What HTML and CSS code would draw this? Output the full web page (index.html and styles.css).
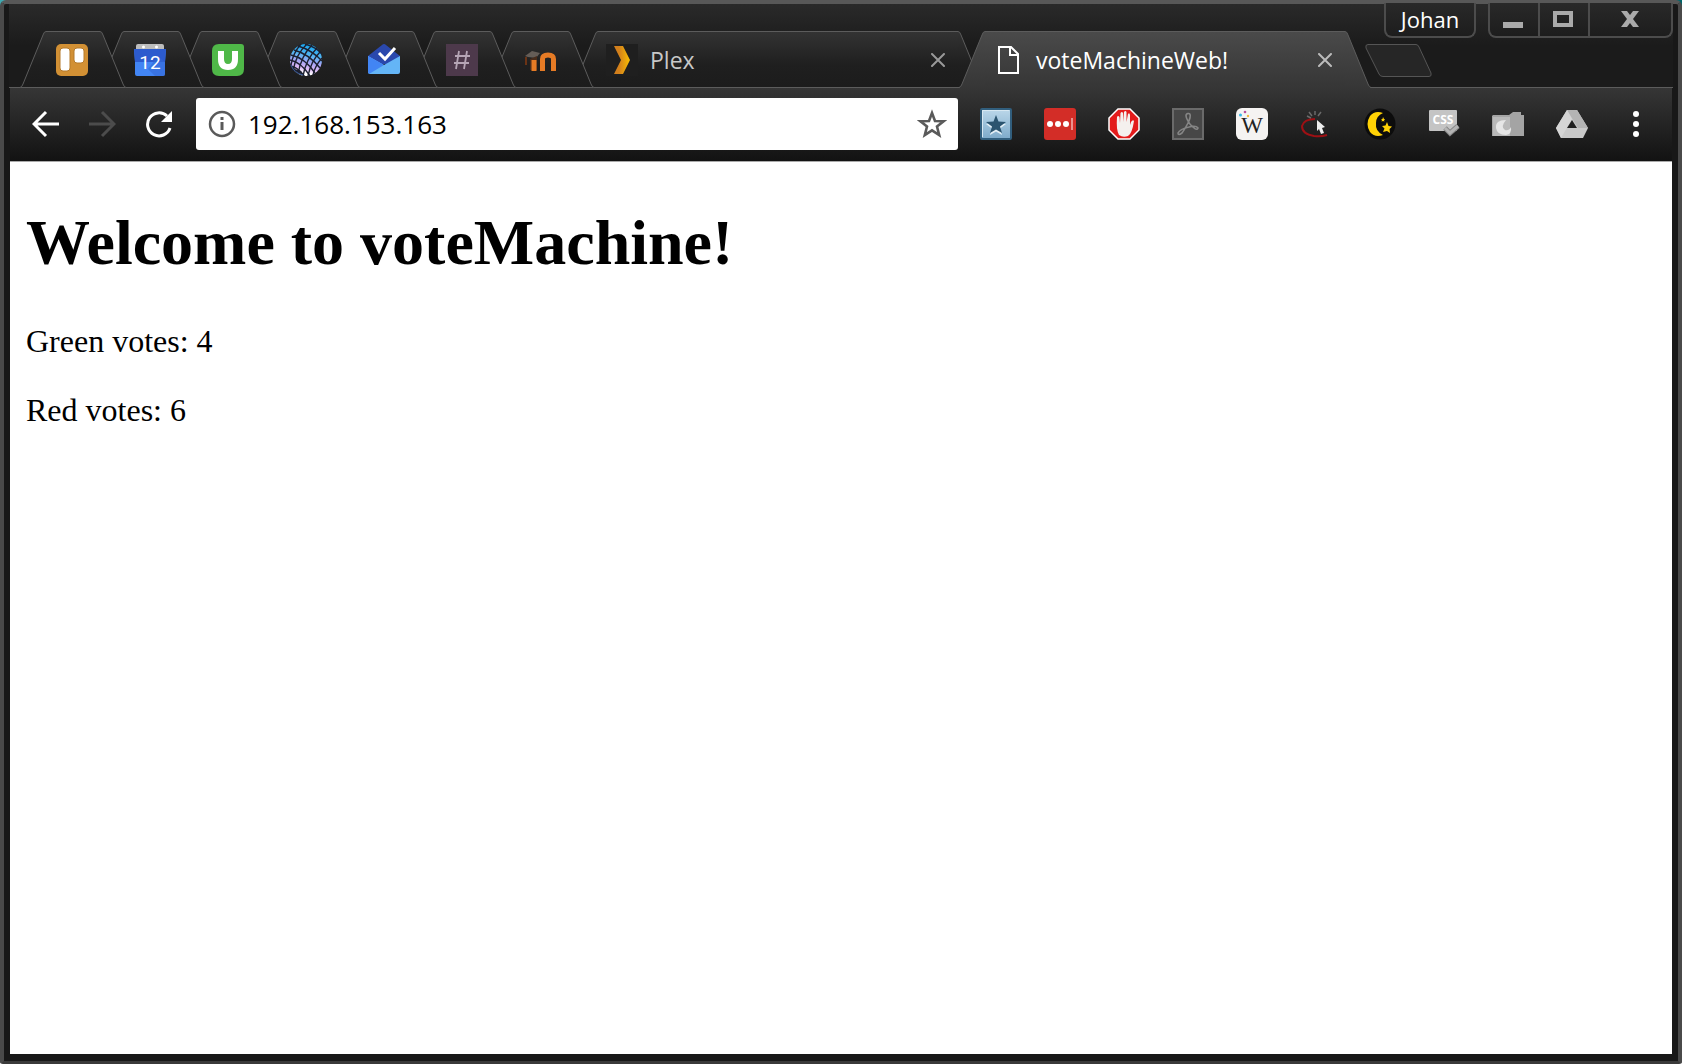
FILE: index.html
```html
<!DOCTYPE html>
<html lang="en">
<head>
<meta charset="utf-8">
<title>voteMachineWeb!</title>
<link rel="stylesheet" href="styles.css">
</head>
<body>
<svg class="defs" aria-hidden="true">
  <defs>
    <linearGradient id="tab-fill" x1="0" y1="0" x2="0" y2="57" gradientUnits="userSpaceOnUse"><stop offset="0" stop-color="#333"/><stop offset=".6" stop-color="#1f1f1f"/><stop offset="1" stop-color="#1c1c1c"/></linearGradient>
    <linearGradient id="active-fill" x1="0" y1="0" x2="0" y2="57" gradientUnits="userSpaceOnUse"><stop offset="0" stop-color="#4a4a4a"/><stop offset="1" stop-color="#363636"/></linearGradient>
    <symbol id="slope-left" viewBox="0 0 26 57"><path d="M0 57Q2 56 3 53L23 4Q24 .5 26 .5V57Z"/><path class="base" d="M1 56.500H26"/><path d="M0 56.500Q2 56 3 53L23 4Q24 .5 26 .5" stroke="#5c5c5c" fill="none"/></symbol>
    <symbol id="slope-right" viewBox="0 0 26 57"><path d="M26 57Q24 56 23 53L3 4Q2 .5 0 .5V57Z"/><path class="base" d="M0 56.500H25"/><path d="M26 56.500Q24 56 23 53L3 4Q2 .5 0 .5" stroke="#5c5c5c" fill="none"/></symbol>
    <symbol id="cross" viewBox="0 0 14 14"><path d="M1 1L13 13M13 1L1 13" stroke="currentColor" stroke-width="2" stroke-linecap="round"/></symbol>
  </defs>
</svg>
<div class="window">
  <header class="titlebar">
    <nav class="tabs" aria-label="Tabs">
      <div class="tab t1"><svg class="slope"><use href="#slope-left"/></svg>
        <button class="face pinned" aria-label="Trello"><svg class="icon" viewBox="0 0 32 32"><rect width="32" height="32" rx="5" fill="#d29034"/><rect x="4" y="4" width="10" height="23" rx="3" fill="#fff" stroke="#b57a2a"/><rect x="18" y="4" width="10" height="15" rx="3" fill="#fff" stroke="#b57a2a"/></svg></button>
        <svg class="slope"><use href="#slope-right"/></svg></div>
      <div class="tab t2"><svg class="slope"><use href="#slope-left"/></svg>
        <button class="face pinned" aria-label="Calendar"><svg class="icon" viewBox="0 0 32 32"><path d="M2 6V2Q2 0 4 0H28Q30 0 30 2V6Z" fill="#bdbdbd"/><circle cx="9.500" cy="3" r="1.500" fill="#fff"/><circle cx="22.500" cy="3" r="1.500" fill="#fff"/><path d="M0 5H32L31 18V30Q31 32 29 32H3Q1 32 1 30V18Z" fill="#4285f4"/><path d="M0 5H32L31 18H1Z" fill="#2c5bce"/><path d="M14 25L24 12L31 18V30Q31 32 29 32H21Z" fill="#3367d6" opacity=".6"/><text x="16" y="25" class="date">12</text></svg></button>
        <svg class="slope"><use href="#slope-right"/></svg></div>
      <div class="tab t3"><svg class="slope"><use href="#slope-left"/></svg>
        <button class="face pinned" aria-label="U"><svg class="icon" viewBox="0 0 32 32"><path d="M7 0H29Q32 0 32 3V25Q32 32 25 32H7Q0 32 0 25V7Q0 0 7 0Z" fill="#4fb848"/><path d="M9 7V15Q9 23 16 23T23 15V7" fill="none" stroke="#fff" stroke-width="6"/></svg></button>
        <svg class="slope"><use href="#slope-right"/></svg></div>
      <div class="tab t4"><svg class="slope"><use href="#slope-left"/></svg>
        <button class="face pinned" aria-label="Globe"><svg class="icon" viewBox="0 0 32 32"><defs><linearGradient id="globe" x1=".6" y1="0" x2=".4" y2="1"><stop offset="0" stop-color="#12a5ee"/><stop offset=".35" stop-color="#55b5f2"/><stop offset=".55" stop-color="#a3a4f5"/><stop offset=".75" stop-color="#d9b5f3"/><stop offset=".9" stop-color="#fff"/></linearGradient></defs><circle cx="16" cy="16" r="16" fill="url(#globe)"/><g fill="none" stroke="#1c2030" stroke-width="1.400"><path d="M8 2Q22 6 32 17M4 6Q19 10 30 24M1 11Q15 14 25 29M0 16Q11 18 20 32M0 22Q8 23 14 32M15 0Q26 3 32 10"/><path d="M11 0Q3 9 1 21M17 0Q6 10 3 27M22 1Q11 12 8 30M27 4Q16 15 13 32M30 8Q21 17 18 32M32 14Q25 22 23 31"/></g><path d="M0 19Q2 30 15 32L11 27L5 25Z" fill="#1c2030"/><path d="M1 21Q4 29 13 31" fill="none" stroke="#3c5f9c"/></svg></button>
        <svg class="slope"><use href="#slope-right"/></svg></div>
      <div class="tab t5"><svg class="slope"><use href="#slope-left"/></svg>
        <button class="face pinned" aria-label="Inbox"><svg class="icon" viewBox="0 0 32 32"><path d="M0 12L14 1Q16 -1 18 1L32 12V20H0Z" fill="#2a48ad"/><path d="M0 12L16 21L32 12V28Q32 30 30 30H2Q0 30 0 28Z" fill="#64b5f6"/><path d="M0 12L16 21L1 30L0 28Z" fill="#4285f4"/><path d="M11 9L17 15L27 4" fill="none" stroke="#fff" stroke-width="3"/></svg></button>
        <svg class="slope"><use href="#slope-right"/></svg></div>
      <div class="tab t6"><svg class="slope"><use href="#slope-left"/></svg>
        <button class="face pinned" aria-label="Slack"><svg class="icon" viewBox="0 0 32 32"><path d="M0 0H32V32H0Z" fill="#4d394b"/><path d="M13 7L10 25M21 7L18 25M9 12H24M8 19H23" fill="none" stroke="#b5a5b5" stroke-width="1.800"/></svg></button>
        <svg class="slope"><use href="#slope-right"/></svg></div>
      <div class="tab t7"><svg class="slope"><use href="#slope-left"/></svg>
        <button class="face pinned" aria-label="Moodle"><svg class="icon" viewBox="0 0 32 32"><path d="M1 12L8 7L16 9L12 14L4 13Z" fill="#655d57"/><path d="M2 13V21" stroke="#6b3315" stroke-width="2"/><path d="M6 15V26H13V12" fill="#4a2d1c"/><path d="M10 27V16M18.500 27V15Q18.500 11 24 11T29.500 15V27" fill="none" stroke="#e67b25" stroke-width="5"/></svg></button>
        <svg class="slope"><use href="#slope-right"/></svg></div>
      <div class="tab wide t8"><svg class="slope"><use href="#slope-left"/></svg>
        <div class="face"><button class="label"><svg class="icon" viewBox="0 0 32 32"><defs><linearGradient id="plex"><stop offset=".3" stop-color="#d27f1c"/><stop offset="1" stop-color="#f9be03"/></linearGradient></defs><path d="M0 0H32V32H0Z" fill="#1f1f1f"/><path d="M8 2H17L24 16L17 30H8L15 16Z" fill="url(#plex)"/></svg><span>Plex</span></button><button class="close" aria-label="Close Plex"><svg width="14" height="14"><use href="#cross"/></svg></button></div>
        <svg class="slope"><use href="#slope-right"/></svg></div>
      <div class="tab wide active"><svg class="slope"><use href="#slope-left"/></svg>
        <div class="face"><button class="label" aria-current="page"><svg class="icon" viewBox="0 0 32 32"><path d="M6 3H18L25 10V29H6ZM17 3V11H25" fill="none" stroke="#fff" stroke-width="2"/></svg><span>voteMachineWeb!</span></button><button class="close" aria-label="Close voteMachineWeb!"><svg width="14" height="14"><use href="#cross"/></svg></button></div>
        <svg class="slope"><use href="#slope-right"/></svg></div>
      <button class="newtab" aria-label="New tab"><svg width="68" height="33" viewBox="0 0 68 33"><path d="M3 .5H51Q53 .5 54 3L66 29Q67 32.500 64 32.500H18Q15 32.500 14 30L1 4Q0 .5 3 .5Z" fill="#262626" stroke="#555"/></svg></button>
    </nav>
    <div class="controls">
      <button class="user">Johan</button>
      <div class="winbuttons">
        <button class="min" aria-label="Minimize"><svg width="22" height="22" viewBox="0 0 22 22"><rect x="1" y="13" width="20" height="6" fill="#aaa"/></svg></button>
        <button class="max" aria-label="Maximize"><svg width="22" height="22" viewBox="0 0 22 22"><path d="M3 4H19V16H3Z" fill="none" stroke="#aaa" stroke-width="4"/></svg></button>
        <button class="quit" aria-label="Close"><svg width="22" height="22" viewBox="0 0 22 22"><path d="M2 2H8L11 6L14 2H20L14 10L20 18H14L11 14L8 18H2L8 10Z" fill="#aaa"/></svg></button>
      </div>
    </div>
  </header>
  <div class="toolbar">
    <button class="nav" aria-label="Back"><svg width="28" height="28" viewBox="0 0 28 28"><path d="M14 2L2 14L14 26M2 14H27" fill="none" stroke="#fff" stroke-width="3"/></svg></button>
    <button class="nav" aria-label="Forward" disabled><svg width="28" height="28" viewBox="0 0 28 28"><path d="M14 2L26 14L14 26M26 14H1" fill="none" stroke="#4c4c4c" stroke-width="3"/></svg></button>
    <button class="nav" aria-label="Reload"><svg width="28" height="28" viewBox="0 0 28 28"><path d="M26 18A11.500 11.500 0 1 1 23 6" fill="none" stroke="#fff" stroke-width="3"/><path d="M28 1V12H17Z" fill="#fff"/></svg></button>
    <div class="omnibox">
      <svg width="28" height="28" viewBox="0 0 28 28"><circle cx="14" cy="14" r="12" fill="none" stroke="#5a5a5a" stroke-width="2.500"/><path d="M14 7V10M14 12V20" stroke="#5a5a5a" stroke-width="3"/></svg>
      <input aria-label="Address" value="192.168.153.163">
      <button class="star" aria-label="Bookmark"><svg width="30" height="30" viewBox="0 0 30 30"><path d="M15 4L18 12L26.500 12.300L20 17.500L22.200 26L15 21.300L7.800 26L10 17.500L3.500 12.300L12 12Z" fill="none" stroke="#5a5a5a" stroke-width="2.600"/></svg></button>
    </div>
    <div class="extensions">
      <button aria-label="Bookmarks"><svg class="icon" viewBox="0 0 32 32"><defs><linearGradient id="blue" x1="0" y1="0" x2="0" y2="1"><stop offset="0" stop-color="#bcd8ea"/><stop offset="1" stop-color="#7daaca"/></linearGradient></defs><rect x="1" y="1" width="30" height="30" rx="1" fill="url(#blue)" stroke="#315e7d" stroke-width="2"/><path d="M2.500 29V2.500H29" stroke="#d7e8f2" fill="none"/><path d="M16 9L18.500 15.500L26 16L20 20.500L22 27L16 23.500L10 27L12 20.500L6 16L13.500 15.500Z" fill="#e3eff6"/><path d="M16 7L18.500 13.500L26 14L20 18.500L22 25L16 21.500L10 25L12 18.500L6 14L13.500 13.500Z" fill="#2b546f"/></svg></button>
      <button aria-label="LastPass"><svg class="icon" viewBox="0 0 32 32"><rect width="32" height="32" rx="3" fill="#d32d27"/><g fill="#fff"><circle cx="6" cy="16" r="3"/><circle cx="14" cy="16" r="3"/><circle cx="22" cy="16" r="3"/></g><path d="M28 10V22" stroke="#f3b4b2" stroke-width="1.500"/></svg></button>
      <button aria-label="AdBlock"><svg class="icon" viewBox="0 0 32 32"><path d="M10 1H22L31 10V22L22 31H10L1 22V10Z" fill="#e31b1b" stroke="#fff" stroke-width="1.500"/><path d="M9 9Q10 7 11.500 9L12 15L12.500 5Q14 3 15 5V14L16 4Q17.500 2 18.500 4V14L20 6Q21.500 4 22 7V17L23 14Q25 11 26 13Q24 26 20 28Q15 30 11 27Q8 22 9 9Z" fill="#f4f0ee"/></svg></button>
      <button aria-label="Acrobat"><svg class="icon" viewBox="0 0 32 32"><path d="M1 1H31V31H1Z" fill="#474747" stroke="#6a6a6a" stroke-width="2"/><path d="M16 13Q12 6 16 5.500T17 13Q13 21 10 25Q6 28 6 25Q8 21 17 19Q24 17 26 20Q25 23 21 19Q18 17 16 13Z" fill="none" stroke="#858585" stroke-width="1.600"/></svg></button>
      <button aria-label="W"><svg class="icon" viewBox="0 0 32 32"><rect width="32" height="32" rx="6" fill="#f5f3f2"/><circle cx="4.500" cy="7" r="1.500" fill="#36b9e8"/><circle cx="9" cy="4" r="1.300" fill="#b84f9b"/><circle cx="12" cy="8" r="1.200" fill="#f3bb38"/><text x="16" y="25" class="letter">W</text></svg></button>
      <button aria-label="Clicker"><svg class="icon" viewBox="0 0 32 32"><path d="M15 11Q4 11 2 18Q2 26 14 28Q21 29 27 27" fill="none" stroke="#9e1014" stroke-width="2"/><path d="M7 8L11 10M9 4L12 8M15 3V7M21 4L18 8" stroke="#6a6a6a" stroke-width="1.500"/><path d="M17 12L25 19L22 20L24 25L21 26L19 21L17 23Z" fill="#eee"/></svg></button>
      <button aria-label="Night mode"><svg class="icon" viewBox="0 0 32 32"><circle cx="16" cy="16" r="15.500" fill="#0c0c0c"/><path d="M19 5Q11 2 6 8Q1 16 6 24Q11 30 19 27Q11 23 12 15Q12 8 19 5Z" fill="#ffd205"/><path d="M23 14L24.500 18L28 18.500L25.500 21L26 25L23 23L19 24L20.500 20.500L18 18L21.500 17.500ZM19 9L20 11L21 11L20 12.500L20.500 13.500L19 13L17.500 13.500L18 12L17 11L18.500 11Z" fill="#ffd205"/></svg></button>
      <button aria-label="CSS viewer"><svg class="icon" viewBox="0 0 32 32"><rect x="1" y="2" width="28" height="21" rx="1" fill="#c4c4c4"/><text x="15" y="16" class="css">CSS</text><path d="M17 20L22 25L30 18" fill="none" stroke="#888" stroke-width="5"/><path d="M17 20L22 25L30 18" fill="none" stroke="#b5b5b5" stroke-width="3"/></svg></button>
      <button aria-label="Folder"><svg class="icon" viewBox="0 0 32 32"><path d="M1 7L17 7L21 4H29V7H32V28H0V8Z" fill="#a4a4a4"/><path d="M1 9H18V28H1Z" fill="#b9b9b9"/><path d="M14 12Q3 12 4 20Q5 27 14 27Q20 26 19 19Q17 23 13 22Q8 19 14 12Z" fill="#e6e6e6"/></svg></button>
      <button aria-label="Drive"><svg class="icon" viewBox="0 0 32 32"><path d="M11 2H21L32 20L27 30H5L0 20Z" fill="#c9c9c9"/><path d="M11 2H21L32 20H22Z" fill="#b4b4b4"/><path d="M0 20L11 2L16 11L5 30Z" fill="#d5d5d5"/><path d="M16 12L21 20H11Z" fill="#202020"/></svg></button>
    </div>
    <button class="menu" aria-label="Menu"><svg width="8" height="28" viewBox="0 0 8 28"><g fill="#fff"><circle cx="4" cy="4" r="3"/><circle cx="4" cy="14" r="3"/><circle cx="4" cy="24" r="3"/></g></svg></button>
  </div>
  <main class="page">
    <h1>Welcome to voteMachine!</h1>
    <p>Green votes: 4</p>
    <p>Red votes: 6</p>
  </main>
</div>
</body>
</html>
```
FILE: styles.css
```css
* { box-sizing: border-box; }
html { background: linear-gradient(90deg, #3fa9b0, #00666a) top / 100% 50% no-repeat #f4f4f4; }
body { margin: 0; font-family: "Open Sans", "Noto Sans", sans-serif; }
button { margin: 0; padding: 0; border: 0; background: none; color: inherit; font: inherit; }
svg { display: block; flex: none; }
.defs { position: absolute; width: 0; height: 0; }
.icon { width: 32px; height: 32px; }

.window {
  display: flex;
  flex-direction: column;
  min-height: 100vh;
  padding: 0 6px 7px;
  border: 4px solid #4a4a4a;
  border-top-color: #585858;
  border-bottom: 3px solid #3a3a3a;
  border-radius: 6px 6px 3px 3px;
  background: #181818;
}

.titlebar {
  display: grid;
  height: 84px;
  margin: 0 -1px;
  background: linear-gradient(#2a2a2a, #1b1b1b 50%);
  border-bottom: 1px solid #5c5c5c;
}
.tabs {
  grid-area: 1 / 1;
  display: flex;
  align-self: end;
  isolation: isolate;
  height: 57px;
  padding-left: 11px;
  margin-bottom: -1px;
}
.tab {
  --base-line: #5c5c5c;
  position: relative;
  display: flex;
  flex: none;
  margin-right: -28px;
  fill: url(#tab-fill);
}
.base { stroke: var(--base-line); }
.slope { width: 26px; height: 57px; }
.face {
  display: flex;
  align-items: center;
  flex: 1;
  min-width: 0;
  padding: 0 13px 0 8px;
  border-top: 1px solid #5c5c5c;
  border-bottom: 1px solid var(--base-line);
  background: linear-gradient(#333, #1f1f1f 60%, #1c1c1c);
}
.pinned { width: 54px; padding: 0 0 0 10px; }
.wide { flex: 0 1 412px; min-width: 0; margin-right: -25px; color: #c8c8c8; font-size: 23px; }
.t1 { z-index: 8; }
.t2 { z-index: 7; }
.t3 { z-index: 6; }
.t4 { z-index: 5; }
.t5 { z-index: 4; }
.t6 { z-index: 3; }
.t7 { z-index: 2; margin-right: -22px; }
.t8 { z-index: 1; }
.active { --base-line: #363636; z-index: 9; margin-right: -6px; color: #fff; fill: url(#active-fill); }
.active .face { background: linear-gradient(#4a4a4a, #363636); }
.label { display: flex; align-items: center; gap: 12px; flex: 1; min-width: 0; text-align: left; white-space: nowrap; }
.active .label { gap: 11px; }
.close { color: #999; }
.active .close { color: #bbb; }
.newtab { align-self: center; margin-top: 2px; }

.controls {
  grid-area: 1 / 1;
  display: flex;
  gap: 12px;
  justify-self: end;
  align-self: start;
  height: 35px;
  margin-top: -1px;
}
.user, .winbuttons {
  border: 2px solid #4c4c4c;
  border-top: 0;
  border-radius: 0 0 8px 8px;
  background: linear-gradient(#292929, #1d1d1d);
}
.user { width: 92px; padding-bottom: 2px; color: #fff; font-size: 22px; line-height: 30px; }
.winbuttons { display: flex; width: 185px; }
.winbuttons button { display: grid; place-items: center; width: 50px; padding-right: 2px; border-right: 2px solid #4c4c4c; }
.winbuttons .quit { flex: 1; border: 0; }

.toolbar {
  display: flex;
  align-items: center;
  height: 74px;
  padding: 0 16px 2px 8px;
  background: linear-gradient(#363636, #121212);
  border-bottom: 1px solid #aaa;
}
.nav { display: grid; place-items: center; width: 56px; height: 52px; }
.omnibox {
  display: flex;
  align-items: center;
  gap: 12px;
  flex: 1;
  min-width: 0;
  height: 52px;
  margin: 0 22px 0 10px;
  padding: 0 11px 0 12px;
  border-radius: 3px;
  background: #fff;
}
.omnibox input {
  flex: 1;
  min-width: 0;
  padding: 0;
  border: 0;
  outline: 0;
  background: none;
  color: #000;
  font: 26px/36px "Open Sans", "Noto Sans", sans-serif;
}
.extensions { display: flex; gap: 32px; }
.menu { display: grid; place-items: center; width: 40px; height: 52px; margin-left: 28px; }

.page {
  flex: 1;
  padding: 1px 16px 0;
  background: #fff;
  color: #000;
  font: 32px/37px "Liberation Serif", "Times New Roman", serif;
}
.page h1 { margin: 43px 0; font-size: 64px; line-height: 74px; }
.page p { margin: 32px 0; }

.date { font: 19px Roboto, sans-serif; fill: #fff; text-anchor: middle; }
.letter { font: 23px "Liberation Serif", serif; fill: #222; text-anchor: middle; }
.css { font: bold 12px "Open Sans", sans-serif; fill: #fff; text-anchor: middle; }
```
